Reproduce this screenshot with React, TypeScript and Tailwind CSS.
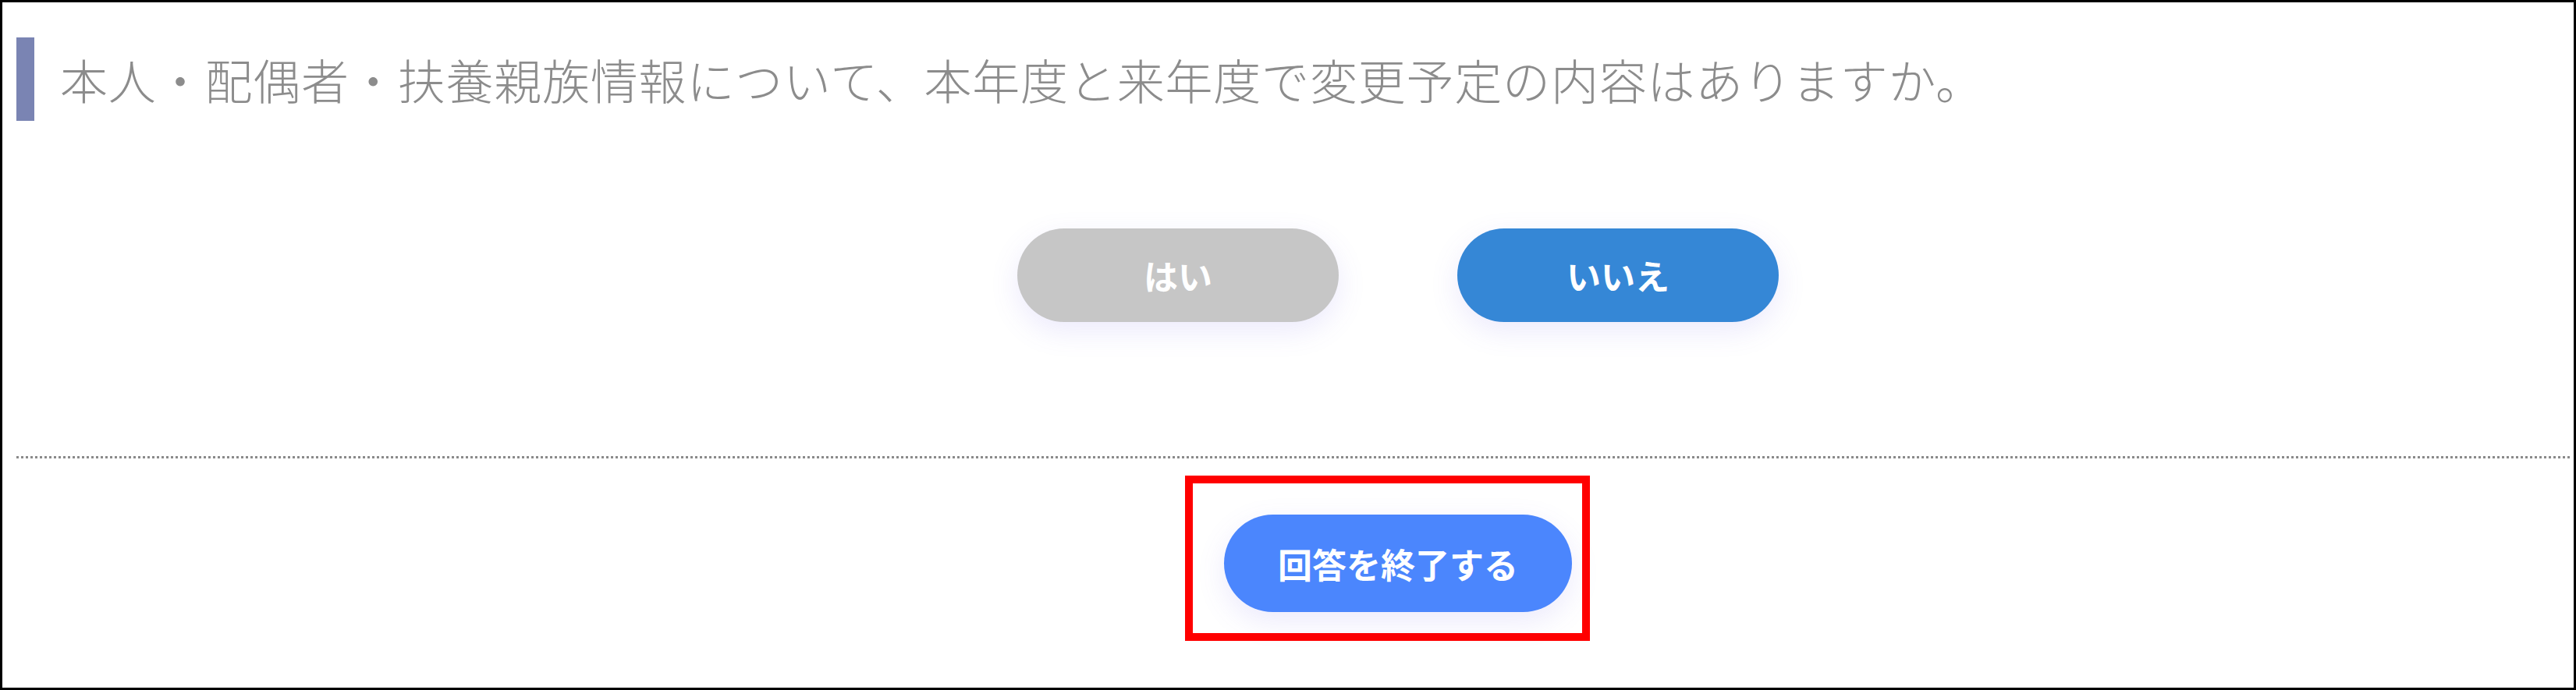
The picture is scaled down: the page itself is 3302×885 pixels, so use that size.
import React from 'react';

const jp = { fontFamily: '"Noto Sans CJK JP", "Noto Sans", sans-serif' };

interface ChoiceProps {
  label: string;
  tone: 'off' | 'on';
}

const Choice: React.FC<ChoiceProps> = ({ label, tone }) => (
  <button
    type="button"
    className={`flex h-[120px] w-[412px] items-center justify-center rounded-full text-[44px] font-bold text-white shadow-[0_12px_36px_rgba(110,90,230,0.13)] ${
      tone === 'on' ? 'bg-[#3587d6]' : 'bg-[#c6c6c6]'
    }`}
    style={jp}
  >
    {label}
  </button>
);

export default function App() {
  return (
    <div className="flex h-[885px] w-[3302px] flex-col border-[3px] border-black bg-white" style={jp}>
      {/* question heading */}
      <div className="mt-[45px] flex items-center pl-[18px]">
        <div className="h-[107px] w-[23px] bg-[#7a84b3]" />
        <div className="ml-[33px] text-[61px] leading-none font-light tracking-[0.8px] text-[#8c8c8c]">
          本人・配偶者・扶養親族情報について、本年度と来年度で変更予定の内容はありますか。
        </div>
      </div>

      {/* answer choices */}
      <div className="mt-[138px] flex justify-center gap-[152px] pl-[282px]">
        <Choice label="はい" tone="off" />
        <Choice label="いいえ" tone="on" />
      </div>

      <div className="mt-[172px] mr-[5px] ml-[18px] border-t-[3px] border-dotted border-[#8a8a8a]" />

      {/* finish */}
      <div className="mt-[22px] flex justify-center pl-[255px]">
        <div className="border-[10px] border-[#ff0000] pt-[40px] pr-[13px] pb-[27px] pl-[40px]">
          <button
            type="button"
            className="flex h-[125px] w-[446px] items-center justify-center rounded-full bg-[#4b86fd] text-[44px] font-bold text-white shadow-[0_12px_36px_rgba(110,90,230,0.13)]"
            style={jp}
          >
            回答を終了する
          </button>
        </div>
      </div>
    </div>
  );
}
